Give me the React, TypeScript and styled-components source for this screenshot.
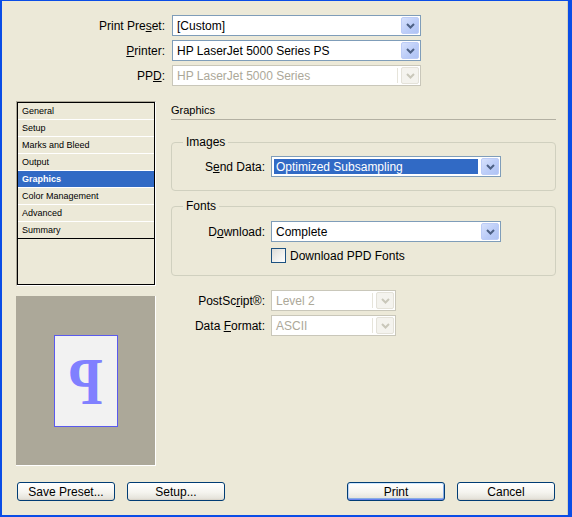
import React from 'react'
import styled, { createGlobalStyle } from 'styled-components'

const GlobalStyle = createGlobalStyle`
  html, body { margin: 0; padding: 0; background: #ECE9D8; }
  body { font-family: "Liberation Sans", Arial, sans-serif; font-size: 12px; color: #000; }
  * { box-sizing: border-box; }
  u { text-underline-offset: 1px; }
`

const Frame = styled.div`
  width: 572px;
  height: 517px;
  background: #ECE9D8;
  border-top: 1px solid #0A4DE6;
  border-left: 2px solid #0A4DE6;
  border-right: 4px solid #0A4DE6;
  border-bottom: 2px solid #0A4DE6;
  box-shadow: inset -1px 0 #D6D2C2;
  padding: 14px 0 0 14px;
  display: flex;
  flex-direction: column;
`

const PresetGrid = styled.div`
  display: grid;
  grid-template-columns: 149px 249px;
  grid-auto-rows: 21px;
  column-gap: 7px;
  row-gap: 4px;
`

// block + text-align so the space before an underlined letter survives
const Label = styled.div`
  align-self: center;
  text-align: right;
  white-space: nowrap;
`

const ComboBox = styled.div<{ $disabled?: boolean }>`
  display: flex;
  height: 21px;
  padding: 1px;
  background: #fff;
  border: 1px solid ${p => (p.$disabled ? '#C9C7BA' : '#7F9DB9')};
`

const ComboValue = styled.div<{ $selected?: boolean; $disabled?: boolean }>`
  flex: 1;
  display: flex;
  align-items: center;
  margin: 1px 3px 1px 1px;
  padding-left: 2px;
  white-space: nowrap;
  overflow: hidden;
  background: ${p => (p.$selected ? '#316AC5' : 'transparent')};
  color: ${p => (p.$selected ? '#fff' : p.$disabled ? '#ACA899' : '#000')};
  border-right: ${p => (p.$disabled ? '1px solid #E6E4DA' : 'none')};
`

const DropButton = styled.div<{ $disabled?: boolean }>`
  width: 18px;
  display: flex;
  align-items: center;
  justify-content: center;
  border-radius: 2px;
  border: 1px solid ${p => (p.$disabled ? '#E4E2D9' : '#BCCCF7')};
  background: ${p =>
    p.$disabled
      ? '#F4F3EE'
      : 'linear-gradient(135deg, #D6E1FC 0%, #BCCDF8 55%, #AFC3F4 100%)'};
`

function Combo({ value, disabled, selected }: { value: string; disabled?: boolean; selected?: boolean }) {
  return (
    <ComboBox $disabled={disabled}>
      <ComboValue $selected={selected} $disabled={disabled}>{value}</ComboValue>
      <DropButton $disabled={disabled}>
        <svg width="9" height="6" viewBox="0 0 9 6">
          <path d="M1 1l3.5 3.5L8 1" fill="none" stroke={disabled ? '#C9C7BA' : '#4D6185'} strokeWidth="2" />
        </svg>
      </DropButton>
    </ComboBox>
  )
}

const Body = styled.div`
  display: flex;
  gap: 15px;
  margin-top: 15px;
`

const Sidebar = styled.div`
  width: 140px;
  display: flex;
  flex-direction: column;
  gap: 10px;
`

const ListFrame = styled.div`
  height: 185px;
  border: 1px solid;
  border-color: #ACA899 #fff #fff #ACA899;
`

const ListInner = styled.div`
  height: 100%;
  border: 1px solid #000;
`

const ListItem = styled.div<{ $active?: boolean }>`
  height: 17px;
  padding-left: 4px;
  display: flex;
  align-items: center;
  font-size: 9px;
  border-bottom: 1px solid #fff;
  background: ${p => (p.$active ? '#316AC5' : 'transparent')};
  color: ${p => (p.$active ? '#fff' : '#000')};
  font-weight: ${p => (p.$active ? 700 : 400)};
  &:last-child { border-bottom-color: #000; }
`

const Preview = styled.div`
  height: 170px;
  background: #ACA899;
  border-right: 1px solid #fff;
  border-bottom: 1px solid #fff;
  display: flex;
  align-items: center;
  justify-content: center;
`

const Page = styled.div`
  width: 64px;
  height: 92px;
  background: #F2F2F2;
  border: 1px solid #5A5AEE;
  display: flex;
  align-items: center;
  justify-content: center;
`

const Glyph = styled.span`
  font-family: "Liberation Serif", "Times New Roman", serif;
  font-weight: 700;
  font-size: 68px;
  line-height: 1;
  color: #8080FF;
  transform: scale(-0.82, 1);
`

const Panel = styled.div`
  width: 385px;
  display: flex;
  flex-direction: column;
`

const PanelTitle = styled.div`
  height: 19px;
  font-size: 11px;
  display: flex;
  align-items: center;
  border-bottom: 1px solid #B3B0A2;
`

const Group = styled.fieldset<{ $top: number; $padTop: number; $padBottom: number }>`
  margin: ${p => p.$top}px 0 0 0;
  padding: ${p => p.$padTop}px 0 ${p => p.$padBottom}px 0;
  border: 1px solid #D0D0BF;
  border-radius: 4px;
  min-inline-size: 0;
`

const Legend = styled.legend`
  margin-left: 11px;
  padding: 0 3px;
  height: 14px;
  line-height: 14px;
`

const FieldGrid = styled.div<{ $label: number; $field: number }>`
  display: grid;
  grid-template-columns: ${p => p.$label}px ${p => p.$field}px;
  grid-auto-rows: auto;
  column-gap: 6px;
  row-gap: 6px;
`

const LooseGrid = styled(FieldGrid)`
  margin-top: 14px;
  row-gap: 4px;
`

const CheckRow = styled.label`
  grid-column: 2;
  display: flex;
  align-items: center;
  gap: 4px;
  height: 15px;
`

const CheckBox = styled.span`
  width: 15px;
  height: 15px;
  border: 1px solid #1C5180;
  background: linear-gradient(135deg, #DCDCD7 0%, #F2F2EF 60%, #FFFFFF 100%);
`

const ButtonBar = styled.div`
  display: flex;
  justify-content: space-between;
  margin-top: 16px;
  padding: 0 13px 0 1px;
`

const ButtonGroup = styled.div`
  display: flex;
  gap: 12px;
`

const Button = styled.button<{ $default?: boolean }>`
  width: 98px;
  height: 19px;
  padding: 0;
  font-family: "Liberation Sans", Arial, sans-serif;
  font-size: 12px;
  color: #000;
  border: 1px solid #003C74;
  border-radius: 3px;
  background: linear-gradient(to bottom, #FFFFFF 0%, #F5F4EF 55%, #E6E4DC 90%, #D6D0C5 100%);
  box-shadow: ${p =>
    p.$default
      ? 'inset 0 1px #CEE7FF, inset 0 -1px #6982EE, inset 1px 0 #BCD4F6, inset -1px 0 #89ADE4, inset 0 -2px #89ADE4'
      : 'none'};
`

const sections = ['General', 'Setup', 'Marks and Bleed', 'Output', 'Graphics', 'Color Management', 'Advanced', 'Summary']

export default function App() {
  return (
    <>
      <GlobalStyle />
      <Frame>
        <PresetGrid>
          <Label>Print Pre<u>s</u>et:</Label>
          <Combo value="[Custom]" />
          <Label><u>P</u>rinter:</Label>
          <Combo value="HP LaserJet 5000 Series PS" />
          <Label>PP<u>D</u>:</Label>
          <Combo value="HP LaserJet 5000 Series" disabled />
        </PresetGrid>

        <Body>
          <Sidebar>
            <ListFrame>
              <ListInner>
                {sections.map(s => (
                  <ListItem key={s} $active={s === 'Graphics'}>{s}</ListItem>
                ))}
              </ListInner>
            </ListFrame>
            <Preview>
              <Page>
                <Glyph>P</Glyph>
              </Page>
            </Preview>
          </Sidebar>

          <Panel>
            <PanelTitle>Graphics</PanelTitle>

            <Group $top={15} $padTop={7} $padBottom={13}>
              <Legend>Images</Legend>
              <FieldGrid $label={93} $field={230}>
                <Label>S<u>e</u>nd Data:</Label>
                <Combo value="Optimized Subsampling" selected />
              </FieldGrid>
            </Group>

            <Group $top={8} $padTop={8} $padBottom={12}>
              <Legend>Fonts</Legend>
              <FieldGrid $label={93} $field={230}>
                <Label>D<u>o</u>wnload:</Label>
                <Combo value="Complete" />
                <CheckRow>
                  <CheckBox />
                  Download PPD Fonts
                </CheckRow>
              </FieldGrid>
            </Group>

            <LooseGrid $label={94} $field={125}>
              <Label>PostSc<u>r</u>ipt®:</Label>
              <Combo value="Level 2" disabled />
              <Label>Data <u>F</u>ormat:</Label>
              <Combo value="ASCII" disabled />
            </LooseGrid>
          </Panel>
        </Body>

        <ButtonBar>
          <ButtonGroup>
            <Button>Save Preset...</Button>
            <Button>Setup...</Button>
          </ButtonGroup>
          <ButtonGroup>
            <Button $default>Print</Button>
            <Button>Cancel</Button>
          </ButtonGroup>
        </ButtonBar>
      </Frame>
    </>
  )
}
